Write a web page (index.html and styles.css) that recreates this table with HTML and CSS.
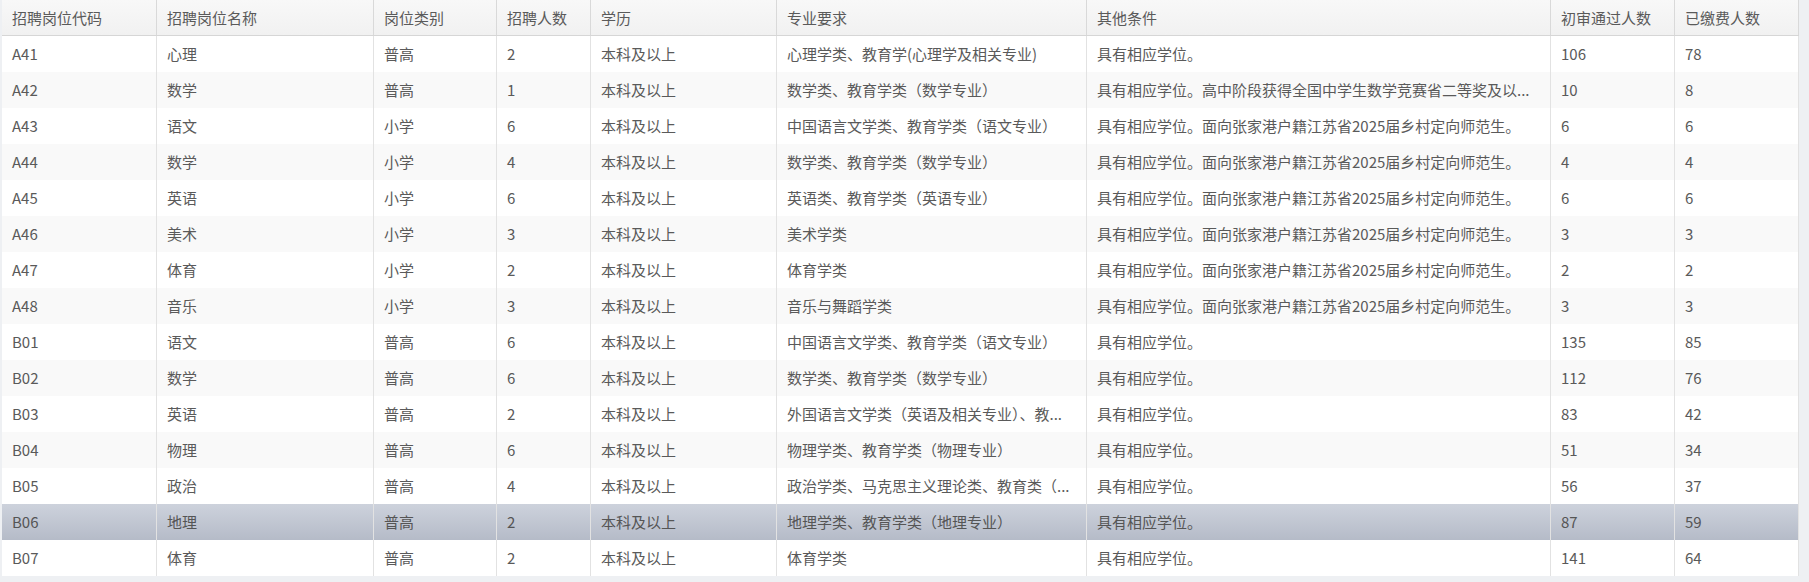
FILE: index.html
```html
<!DOCTYPE html>
<html lang="zh-CN">
<head>
  <meta charset="UTF-8" />
  <meta name="viewport" content="width=device-width, initial-scale=1.0"/>
  <title>招聘岗位</title>
  <link rel="stylesheet" href="styles.css">
</head>
<body>
  <div class="grid">
    <div class="row head">
      <div class="cell">招聘岗位代码</div>
      <div class="cell">招聘岗位名称</div>
      <div class="cell">岗位类别</div>
      <div class="cell">招聘人数</div>
      <div class="cell">学历</div>
      <div class="cell">专业要求</div>
      <div class="cell">其他条件</div>
      <div class="cell">初审通过人数</div>
      <div class="cell">已缴费人数</div>
    </div>
    <div id="rows"></div>
  </div>

  <script>
    const cond = '具有相应学位。';
    const rural = '具有相应学位。面向张家港户籍江苏省2025届乡村定向师范生。';
    // long texts are shown already shortened, the way the grid displays them
    const data = [
      ['A41', '心理', '普高', 2, '心理学类、教育学(心理学及相关专业)', cond, 106, 78],
      ['A42', '数学', '普高', 1, '数学类、教育学类（数学专业）', '具有相应学位。高中阶段获得全国中学生数学竞赛省二等奖及以...', 10, 8],
      ['A43', '语文', '小学', 6, '中国语言文学类、教育学类（语文专业）', rural, 6, 6],
      ['A44', '数学', '小学', 4, '数学类、教育学类（数学专业）', rural, 4, 4],
      ['A45', '英语', '小学', 6, '英语类、教育学类（英语专业）', rural, 6, 6],
      ['A46', '美术', '小学', 3, '美术学类', rural, 3, 3],
      ['A47', '体育', '小学', 2, '体育学类', rural, 2, 2],
      ['A48', '音乐', '小学', 3, '音乐与舞蹈学类', rural, 3, 3],
      ['B01', '语文', '普高', 6, '中国语言文学类、教育学类（语文专业）', cond, 135, 85],
      ['B02', '数学', '普高', 6, '数学类、教育学类（数学专业）', cond, 112, 76],
      ['B03', '英语', '普高', 2, '外国语言文学类（英语及相关专业）、教...', cond, 83, 42],
      ['B04', '物理', '普高', 6, '物理学类、教育学类（物理专业）', cond, 51, 34],
      ['B05', '政治', '普高', 4, '政治学类、马克思主义理论类、教育类（...', cond, 56, 37],
      ['B06', '地理', '普高', 2, '地理学类、教育学类（地理专业）', cond, 87, 59],
      ['B07', '体育', '普高', 2, '体育学类', cond, 141, 64],
    ];
    const selected = 'B06';

    const box = document.getElementById('rows');
    data.forEach((d, i) => {
      const row = document.createElement('div');
      row.className = 'row';
      if (i % 2 === 1) row.classList.add('alt');
      if (d[0] === selected) row.classList.add('selected');
      const cells = [d[0], d[1], d[2], d[3], '本科及以上', d[4], d[5], d[6], d[7]];
      cells.forEach(v => {
        const c = document.createElement('div');
        c.className = 'cell';
        c.innerText = v;
        row.appendChild(c);
      });
      box.appendChild(row);
    });
  </script>
</body>
</html>
```

FILE: styles.css
```css
body {
  margin: 0;
  background: #eef0f3;
  font-family: "Noto Sans CJK SC", "Noto Sans", sans-serif;
  font-size: 15px;
  color: #5a5a5a;
}

.grid {
  margin-left: 2px;
  width: 1797px;
  background: #fff;
}

.row {
  display: grid;
  grid-template-columns: 155px 217px 123px 94px 186px 310px 464px 124px 124px;
  height: 36px;
}
.row.alt { background: #f9f9f9; }
.row.selected {
  background: linear-gradient(#cdd2dc, #b5bbc8);
  color: #555;
}

.head {
  height: 35px;
  background: linear-gradient(#f8f8f8, #f1f1f1);
  border-bottom: 1px solid #d6d6d6;
}

.cell {
  padding: 0 10px;
  line-height: 36px;
  border-right: 1px solid #e2e2e2;
  white-space: nowrap;
  overflow: hidden;
}
.head .cell {
  line-height: 35px;
  border-right-color: #d9d9d9;
}
```
